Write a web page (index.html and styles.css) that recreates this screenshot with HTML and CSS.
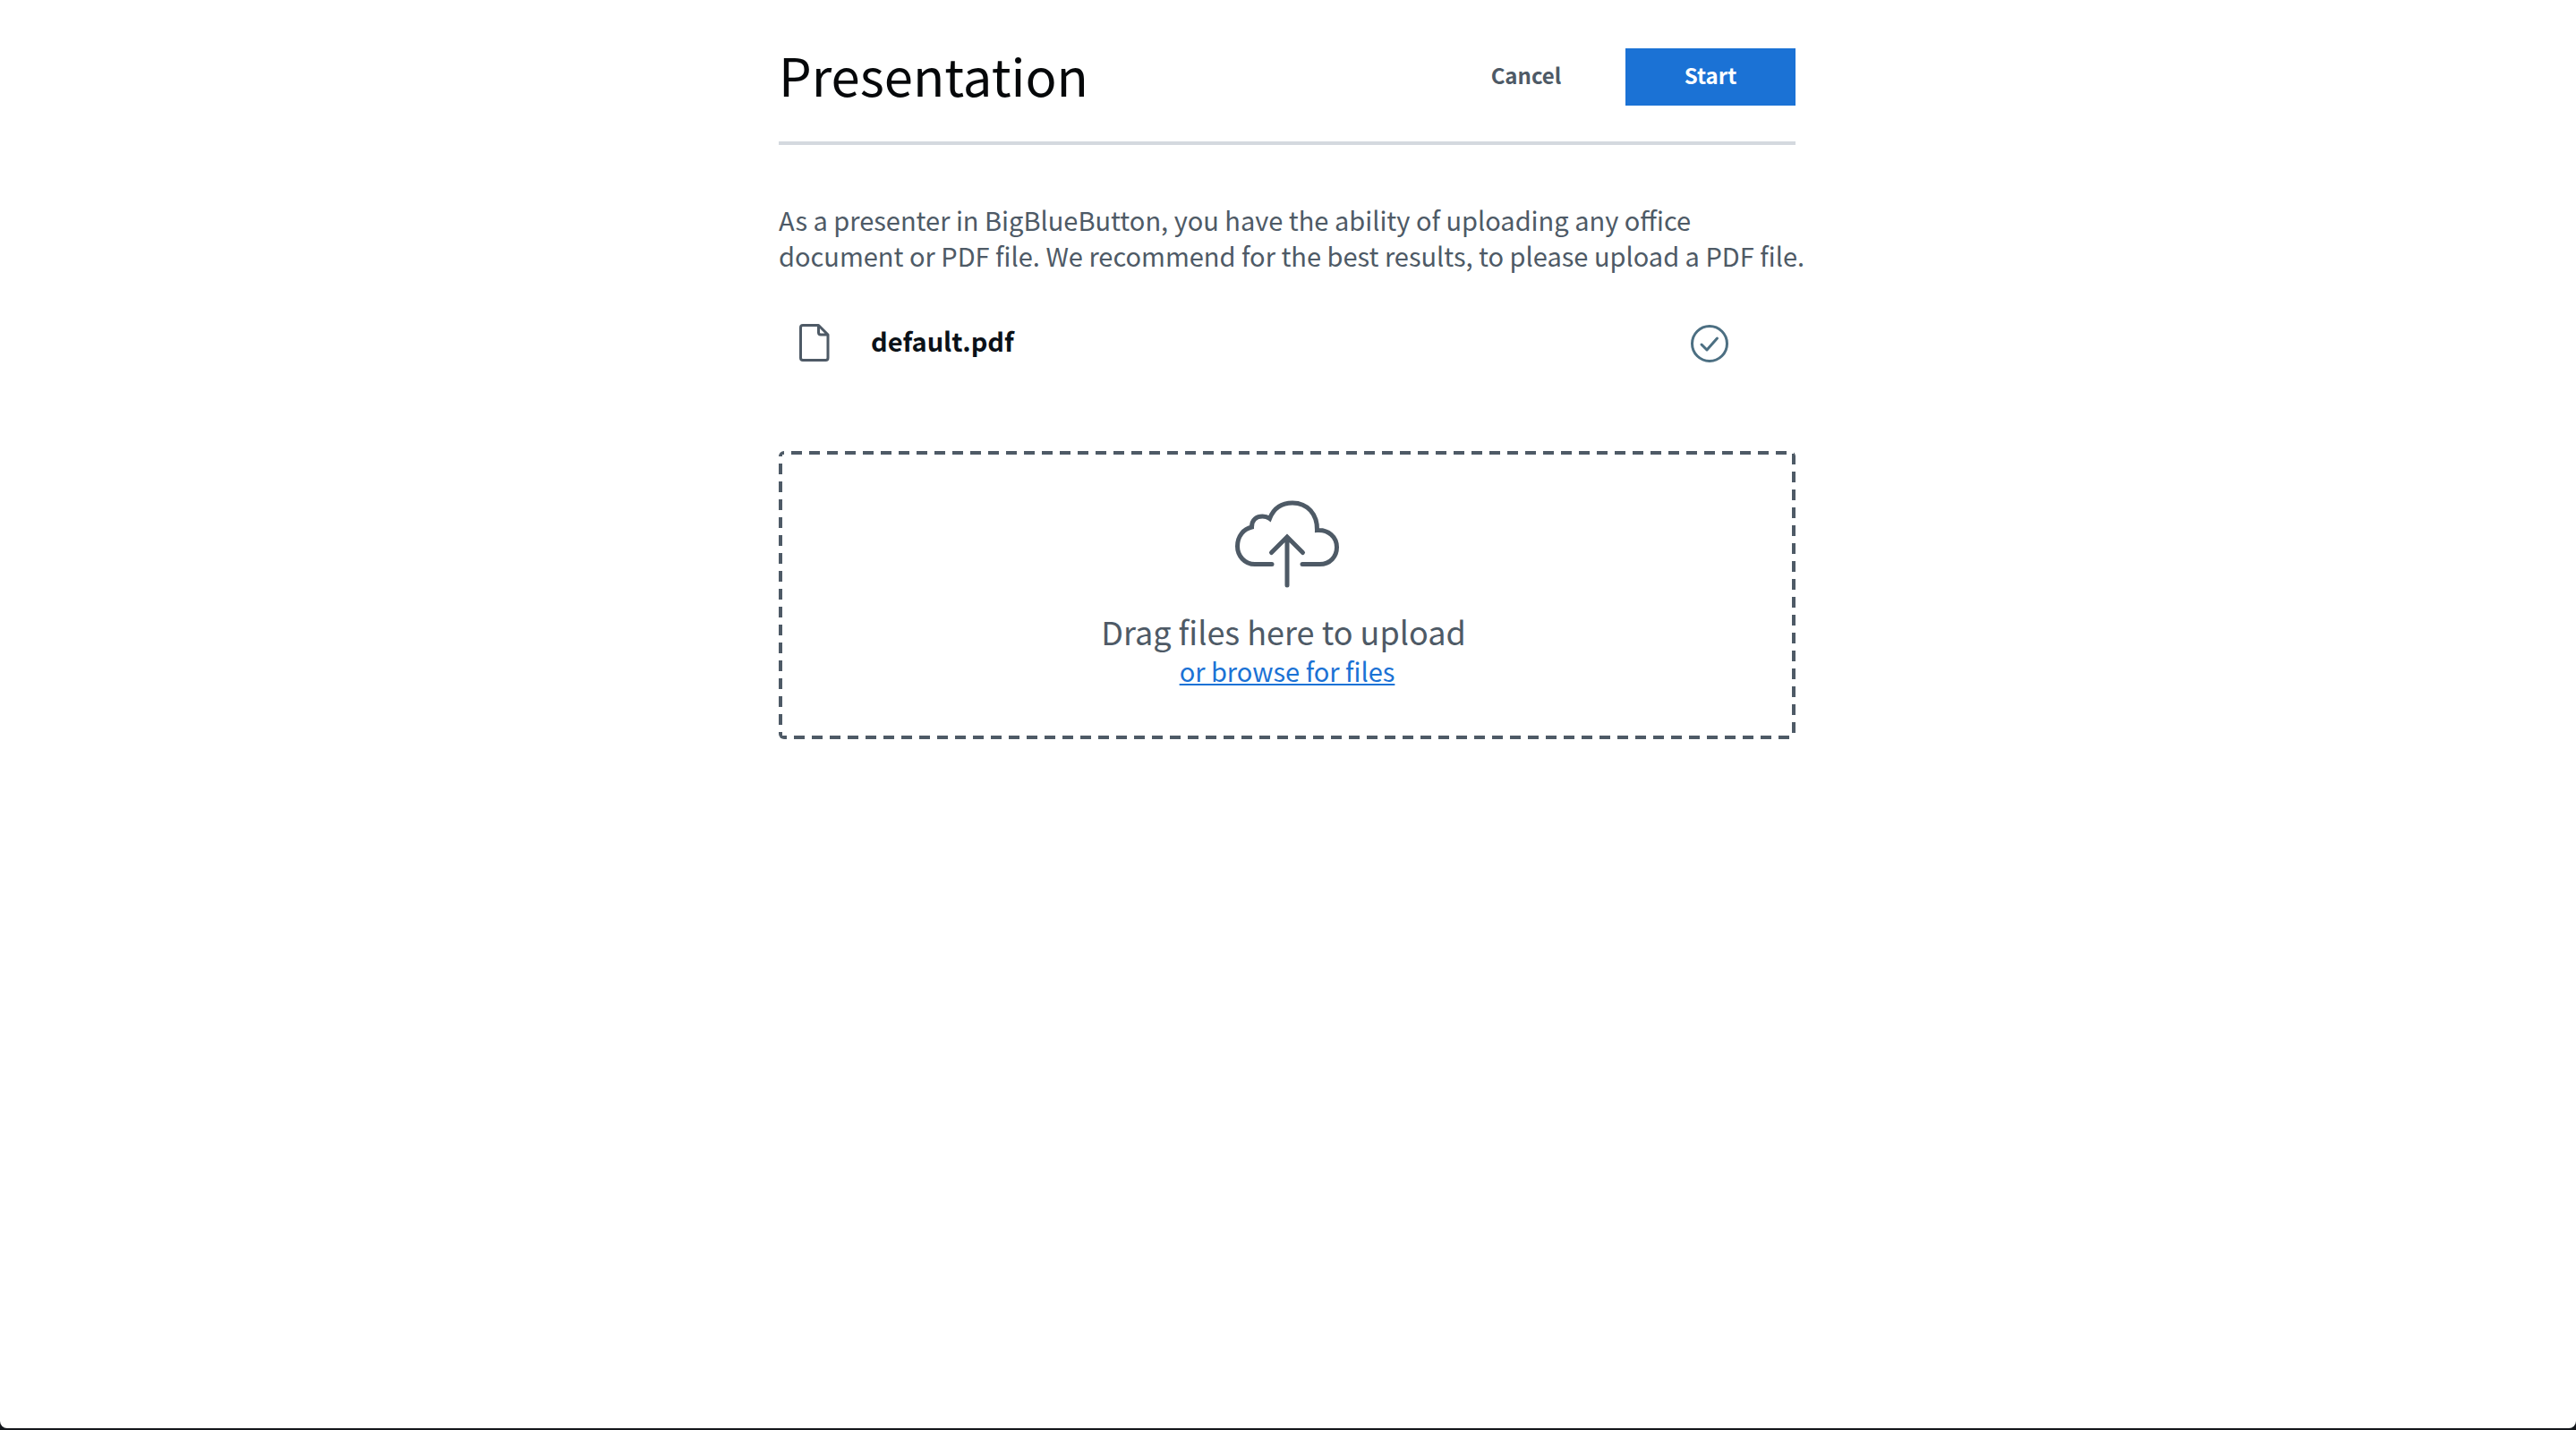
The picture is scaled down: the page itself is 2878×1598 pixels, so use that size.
FILE: index.html
```html
<!DOCTYPE html>
<html lang="en">
<head>
<meta charset="utf-8">
<meta name="viewport" content="width=device-width, initial-scale=1">
<title>Presentation</title>
<link rel="stylesheet" href="styles.css">
</head>
<body>
<main class="modal">
  <div class="content">
    <header class="header">
      <h1 class="title">Presentation</h1>
      <div class="actions">
        <button type="button" class="btn">Cancel</button>
        <button type="button" class="btn btn-primary">Start</button>
      </div>
    </header>
    <p class="intro">As a presenter in BigBlueButton, you have the ability of uploading any office document or PDF file. We recommend for the best results, to please upload a PDF file.</p>
    <ul class="files">
      <li class="file">
        <svg class="icon" viewBox="0 0 44 44" aria-hidden="true"><path d="M4 1.500H21.500L32 12V38Q32 40.500 29.500 40.500H4Q1.500 40.500 1.500 38V4Q1.500 1.500 4 1.500ZM21.500 1.500V9.500Q21.500 12 24 12H32"/></svg>
        <span class="file-name">default.pdf</span>
        <button type="button" class="check" aria-label="Current presentation" aria-pressed="true">
          <svg class="icon" viewBox="0 0 44 44" aria-hidden="true"><circle cx="22" cy="22" r="19.500"/><path d="M13 23L19 29L30.500 16"/></svg>
        </button>
      </li>
    </ul>
    <section class="dropzone">
      <svg class="cloud" viewBox="0 0 116 98" aria-hidden="true"><path d="M41 71.500H22C10.500 71.500 2.500 62 2.500 51.500C2.500 40 9.500 32 18.500 30C18.500 21 24.500 18 30.500 18Q35 18 38.500 20.500C43 9 52 3 64 3C81 3 92 16 91.500 33.500C104 32.500 113.500 41 113.500 52.500C113.500 63 106 71.500 94.500 71.500H75"/><path d="M58 95V41M40.500 58.500L58 41L75.500 58.500"/></svg>
      <p class="drop-text">Drag files here to upload&nbsp;</p>
      <a class="browse" href="#">or browse for files</a>
    </section>
  </div>
</main>
</body>
</html>
```
FILE: styles.css
```css
* {
  box-sizing: border-box;
}

body {
  margin: 0;
  padding-bottom: 2px;
  min-height: 100vh;
  display: flex;
  background: #14171c;
  color: #4e5a66;
  font: 29px/40px "Noto Sans CJK JP", "Noto Sans CJK SC", sans-serif;
}

.modal {
  flex: 1;
  padding: 48px 26px 48px 24px;
  background: #fff;
  border-radius: 0 0 8px 8px;
}

.content {
  max-width: 1136px;
  margin: 0 auto;
}

.header {
  display: flex;
  justify-content: space-between;
  align-items: flex-end;
  padding-bottom: 40px;
  border-bottom: 4px solid #d4d9df;
}

.title {
  margin: 0;
  font-size: 58px;
  font-weight: 400;
  line-height: 70px;
  color: #06080a;
}

.actions {
  display: flex;
  gap: 16px;
}

.btn {
  min-width: 190px;
  height: 64px;
  padding: 0 24px 4px;
  border: 0;
  background: none;
  color: #4e5a66;
  font: 700 24px/40px "Noto Sans CJK JP", "Noto Sans CJK SC", sans-serif;
}

.btn-primary {
  background: #1b72d5;
  color: #fff;
}

.intro {
  margin: 63px -16px 56px 0;
}

.files {
  margin: 0;
  padding: 0 74px 0 23px;
  list-style: none;
}

.file {
  display: flex;
  align-items: center;
  height: 46px;
}

.icon {
  display: block;
  width: 44px;
  height: 44px;
  fill: none;
  stroke: currentColor;
  stroke-width: 3px;
  stroke-linecap: round;
  stroke-linejoin: round;
}

.file-name {
  flex: 1;
  padding: 0 36px 8px;
  font-weight: 700;
  color: #0b1118;
}

.check {
  padding: 0;
  border: 0;
  background: none;
  color: #4c6f82;
}

/* Long dashes drawn as repeating tiles, one layer per side. */
.dropzone {
  --dash: #4e5a66 0 12px, transparent 12px;
  display: flex;
  flex-direction: column;
  align-items: center;
  margin-top: 97px;
  padding: 55px 24px 57px;
  border-radius: 6px;
  background:
    linear-gradient(90deg, var(--dash)) 14px 0 / 20px 4px repeat-x,
    linear-gradient(90deg, var(--dash)) 17px 100% / 20px 4px repeat-x,
    linear-gradient(var(--dash)) 0 14px / 4px 20px repeat-y,
    linear-gradient(var(--dash)) 100% 3px / 4px 20px repeat-y;
}

.cloud {
  width: 116px;
  height: 98px;
  fill: none;
  stroke: currentColor;
  stroke-width: 5px;
  stroke-linecap: round;
}

.drop-text {
  margin: 24px 0 0;
  font-size: 36px;
  line-height: 48px;
  white-space: nowrap;
}

.browse {
  color: #1b72d5;
  text-decoration-thickness: 2px;
  text-underline-offset: 2px;
  text-decoration-skip-ink: none;
}
```
